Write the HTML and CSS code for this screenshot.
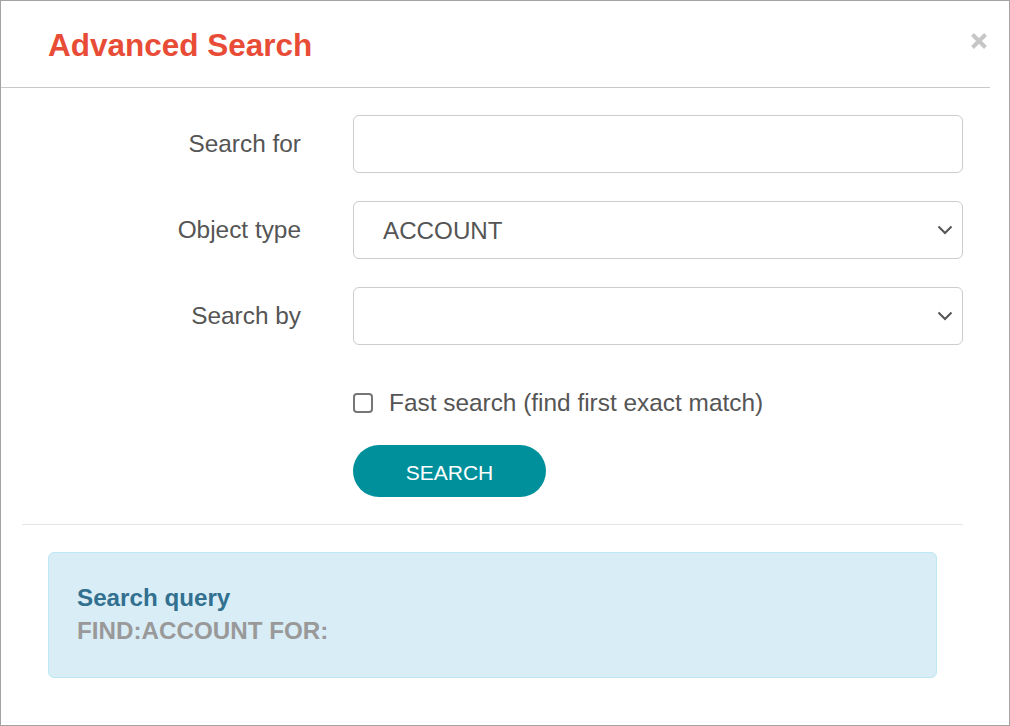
FILE: index.html
```html
<!DOCTYPE html>
<html>
<head>
<meta charset="utf-8">
<link rel="stylesheet" href="styles.css">
</head>
<body>
<div class="dialog">
  <div class="header">
    <h1 class="title">Advanced Search</h1>
    <button class="close" aria-label="Close">
      <svg width="18" height="18" viewBox="0 0 18 18"><path d="M2.5 2.5 L15.5 15.5 M15.5 2.5 L2.5 15.5" stroke="#c6c6c6" stroke-width="4" stroke-linecap="butt"/></svg>
    </button>
  </div>
  <div class="body">
    <form class="form">
      <div class="row">
        <label class="label">Search for</label>
        <div class="control"><input class="field" type="text"></div>
      </div>
      <div class="row">
        <label class="label">Object type</label>
        <div class="control">
          <select class="field select"><option>ACCOUNT</option></select>
          <svg class="chev" width="16" height="10" viewBox="0 0 16 10"><path d="M1.5 1.5 L8 8 L14.5 1.5" fill="none" stroke="#555" stroke-width="2"/></svg>
        </div>
      </div>
      <div class="row">
        <label class="label">Search by</label>
        <div class="control">
          <select class="field select"><option></option></select>
          <svg class="chev" width="16" height="10" viewBox="0 0 16 10"><path d="M1.5 1.5 L8 8 L14.5 1.5" fill="none" stroke="#555" stroke-width="2"/></svg>
        </div>
      </div>
      <div class="row check-row">
        <div class="label"></div>
        <label class="check"><input type="checkbox" class="box"><span>Fast search (find first exact match)</span></label>
      </div>
      <div class="row btn-row">
        <div class="label"></div>
        <button type="button" class="btn">SEARCH</button>
      </div>
    </form>
    <hr class="sep">
    <div class="info">
      <div class="info-title">Search query</div>
      <div class="info-query">FIND:ACCOUNT FOR:</div>
    </div>
  </div>
</div>
</body>
</html>
```

FILE: styles.css
```css
* { box-sizing: border-box; }
html, body { margin: 0; padding: 0; background: #fff; }
body { font-family: "Liberation Sans", Arial, sans-serif; color: #555; }

.dialog {
  width: 1010px;
  height: 726px;
  border: 1px solid #a3a3a3;
  background: #fff;
  overflow: hidden;
}

.header {
  position: relative;
  width: 989px;
  height: 87px;
  border-bottom: 1px solid #c8c8c8;
  display: flex;
  align-items: center;
  padding-left: 47px;
}
.title {
  margin: 0;
  font-size: 31.5px;
  font-weight: bold;
  color: #e84c36;
  line-height: 1;
  padding-top: 4px;
}
.close {
  position: absolute;
  right: 2px;
  top: 31px;
  width: 18px;
  height: 18px;
  padding: 0;
  border: 0;
  background: none;
}
.close svg { display: block; }

.body { padding: 27px 0 0 21px; }

.form { display: flex; flex-direction: column; }
.row {
  display: flex;
  align-items: center;
  gap: 52px;
  margin-bottom: 28px;
}
.label {
  width: 279px;
  text-align: right;
  font-size: 24.4px;
  color: #555;
  flex: none;
}
.control { position: relative; width: 610px; }
.field {
  display: block;
  width: 610px;
  height: 58px;
  border: 1px solid #cccccc;
  border-radius: 6px;
  background: #fff;
  font-family: "Liberation Sans", Arial, sans-serif;
  font-size: 24.2px;
  color: #555;
  padding: 0 29px;
  outline: none;
}
.select { appearance: none; -webkit-appearance: none; }
.chev {
  position: absolute;
  right: 10px;
  top: 24px;
  pointer-events: none;
}

.check-row { height: 60px; margin-bottom: 12px; }
.check {
  display: flex;
  align-items: center;
  gap: 16px;
  font-size: 24.4px;
  color: #555;
}
.box {
  appearance: none;
  -webkit-appearance: none;
  width: 20px;
  height: 20px;
  margin: 0;
  border: 2px solid #767676;
  border-radius: 4px;
  background: #fff;
}

.btn-row { margin-bottom: 0; }
.btn {
  width: 193px;
  height: 52px;
  border: 0;
  border-radius: 26px;
  background: #00909b;
  color: #fff;
  font-family: "Liberation Sans", Arial, sans-serif;
  font-size: 21px;
  padding: 3px 0 0 0;
}

.sep {
  width: 941px;
  margin: 27px 0 27px 0;
  border: 0;
  border-top: 1px solid #e5e5e5;
  height: 0;
}

.info {
  margin-left: 26px;
  width: 889px;
  height: 126px;
  background: #d9edf7;
  border: 1px solid #bce8f1;
  border-radius: 6px;
  padding: 28px 28px 0 28px;
  font-size: 24.2px;
  font-weight: bold;
  line-height: 33px;
}
.info-title { color: #31708f; }
.info-query { color: #999; }
```
